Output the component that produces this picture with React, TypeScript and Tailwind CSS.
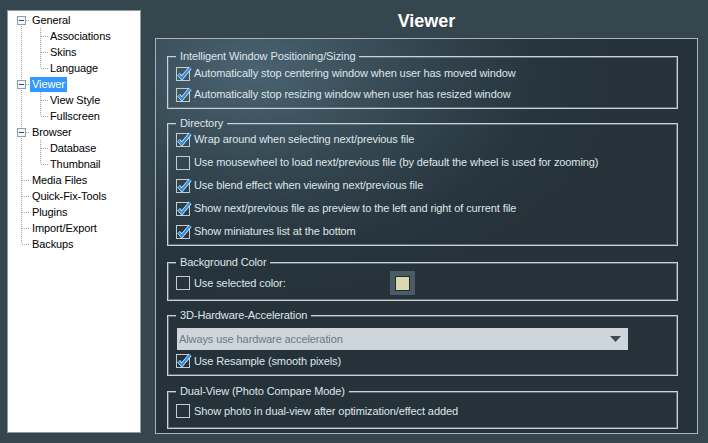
import React from "react"

const LINE = "#a3a3a3"

type TreeItem = {
	label: string
	level: 0 | 1
	box?: boolean
	last?: boolean
	childLast?: boolean
	selected?: boolean
}

const tree: TreeItem[] = [
	{ label: "General", level: 0, box: true },
	{ label: "Associations", level: 1 },
	{ label: "Skins", level: 1 },
	{ label: "Language", level: 1, childLast: true },
	{ label: "Viewer", level: 0, box: true, selected: true },
	{ label: "View Style", level: 1 },
	{ label: "Fullscreen", level: 1, childLast: true },
	{ label: "Browser", level: 0, box: true },
	{ label: "Database", level: 1 },
	{ label: "Thumbnail", level: 1, childLast: true },
	{ label: "Media Files", level: 0 },
	{ label: "Quick-Fix-Tools", level: 0 },
	{ label: "Plugins", level: 0 },
	{ label: "Import/Export", level: 0 },
	{ label: "Backups", level: 0, last: true },
]

const TreeGutter = ({ item, first }: { item: TreeItem; first: boolean }) => {
	const w = item.level === 0 ? 17 : 35
	return (
		<svg width={w} height={16} shapeRendering="crispEdges" className="shrink-0">
			{/* parent vertical line */}
			<line
				x1={8.5}
				y1={first ? 8 : 0}
				x2={8.5}
				y2={item.last ? 8 : 16}
				stroke={LINE}
				strokeDasharray="1 1"
			/>
			{item.level === 0 && (
				<line x1={9} y1={8.5} x2={17} y2={8.5} stroke={LINE} strokeDasharray="1 1" />
			)}
			{item.level === 1 && (
				<>
					<line
						x1={27.5}
						y1={0}
						x2={27.5}
						y2={item.childLast ? 8 : 16}
						stroke={LINE}
						strokeDasharray="1 1"
					/>
					<line x1={28} y1={8.5} x2={35} y2={8.5} stroke={LINE} strokeDasharray="1 1" />
				</>
			)}
			{item.box && (
				<>
					<rect x={4.5} y={4.5} width={8} height={8} fill="#f4f6f8" stroke="#8d9db0" />
					<line x1={6} y1={8.5} x2={11} y2={8.5} stroke="#2e4a78" />
				</>
			)}
		</svg>
	)
}

const Check = ({ checked }: { checked: boolean }) => (
	<svg width={16} height={16} className="shrink-0">
		<rect x={0.5} y={1.5} width={13} height={13} fill="none" stroke="#c3ccd1" />
		{checked && (
			<>
				<path d="M2.6 8.2 L5.8 12 L14.2 1.8" fill="none" stroke="#e6f2fb" strokeWidth={3.6} />
				<path d="M2.6 8.2 L5.8 12 L14.2 1.8" fill="none" stroke="#2e8fe2" strokeWidth={2.2} />
			</>
		)}
	</svg>
)

const Option = (props: { checked: boolean; label: string; h: string; extra?: string }) => {
	const { checked, label, h, extra } = props
	return (
		<div className={`flex items-center ${h} ${extra ?? ""}`}>
			<Check checked={checked} />
			<span className="ml-[2px] whitespace-nowrap">{label}</span>
		</div>
	)
}

const Group = (props: { title: string; className?: string; bodyClass: string; children: React.ReactNode }) => {
	const { title, className, bodyClass, children } = props
	return (
		<div className={`w-[511px] ${className ?? ""}`}>
			<div className="flex h-[14px]">
				<div className="w-[9px] mt-[7px] border-t border-l border-[#c9d3d8] shadow-[inset_1px_1px_0_#5d6f79]" />
				<span className="px-[4px] leading-[14px] whitespace-nowrap">{title}</span>
				<div className="flex-1 mt-[7px] border-t border-r border-[#c9d3d8] shadow-[inset_-1px_1px_0_#5d6f79]" />
			</div>
			<div
				className={`border-x border-b border-[#c9d3d8] shadow-[inset_1px_0_0_#5d6f79,inset_-1px_-1px_0_#5d6f79] pl-[8px] ${bodyClass}`}
			>
				{children}
			</div>
		</div>
	)
}

export default function App() {
	return (
		<div
			className="w-[708px] h-[443px] bg-[#36464f] flex items-start pt-[10px] pl-[7px] overflow-hidden"
			style={{ fontFamily: '"Liberation Sans", Arial, sans-serif' }}
		>
			{/* left tree */}
			<div className="w-[134px] h-[423px] bg-white border border-[#8e9ba3] pt-[1px] text-[11px] tracking-[-0.1px] text-black">
				{tree.map((item, i) => (
					<div key={item.label} className="flex items-center h-[16px] pl-[5px]">
						<TreeGutter item={item} first={i === 0} />
						<span
							className={`px-[2px] leading-[15px] whitespace-nowrap ${
								item.selected ? "bg-[#3399ff] text-white" : ""
							}`}
						>
							{item.label}
						</span>
					</div>
				))}
			</div>

			{/* right side */}
			<div className="ml-[14px] -mt-[10px] flex flex-col w-[543px]">
				<div className="h-[38px] pt-[11px] text-center text-[18px] leading-[20px] font-bold text-white">
					Viewer
				</div>
				<div className="h-[396px] border border-[#a7b4bb] bg-[radial-gradient(ellipse_70%_60%_at_18%_8%,#4a6371_0%,#33454f_45%,#27353e_75%,#25323a_100%)] pt-[10px] pl-[11px] text-[11px] tracking-[-0.1px] text-[#dfe6ea]">
					<Group title="Intelligent Window Positioning/Sizing" bodyClass="pb-[3px]">
						<Option checked h="h-[21px]" label="Automatically stop centering window when user has moved window" />
						<Option checked h="h-[21px]" label="Automatically stop resizing window when user has resized window" />
					</Group>

					<Group title="Directory" className="mt-[7px]" bodyClass="pb-[2px]">
						<Option checked h="h-[23px]" extra="-mt-[2px]" label="Wrap around when selecting next/previous file" />
						<Option
							checked={false}
							h="h-[23px]"
							label="Use mousewheel to load next/previous file (by default the wheel is used for zooming)"
						/>
						<Option checked h="h-[23px]" label="Use blend effect when viewing next/previous file" />
						<Option checked h="h-[23px]" label="Show next/previous file as preview to the left and right of current file" />
						<Option checked h="h-[23px]" label="Show miniatures list at the bottom" />
					</Group>

					<Group title="Background Color" className="mt-[9px]" bodyClass="pt-[3px] pb-[6px]">
						<div className="flex items-center h-[22px]">
							<Check checked={false} />
							<span className="ml-[2px] w-[196px] whitespace-nowrap">Use selected color:</span>
							<div className="w-[25px] h-[24px] bg-[#4b5c66] flex items-center justify-center">
								<div className="w-[15px] h-[15px] bg-[#d9d8b0] border border-[#1d2a30]" />
							</div>
						</div>
					</Group>

					<Group title="3D-Hardware-Acceleration" className="mt-[7px]" bodyClass="pt-[6px] pb-[3px]">
						<div className="ml-[1px] w-[451px] h-[22px] bg-[#ced6db] flex items-center justify-between pl-[2px] pr-[7px] text-[#6a7983]">
							<span>Always use hardware acceleration</span>
							<svg width={11} height={6}>
								<path d="M0 0 H11 L5.5 6 Z" fill="#3c4b55" />
							</svg>
						</div>
						<Option checked h="h-[22px]" label="Use Resample (smooth pixels)" />
					</Group>

					<Group title="Dual-View (Photo Compare Mode)" className="mt-[8px]" bodyClass="pt-[2px] pb-[6px]">
						<Option checked={false} h="h-[22px]" label="Show photo in dual-view after optimization/effect added" />
					</Group>
				</div>
			</div>
		</div>
	)
}
